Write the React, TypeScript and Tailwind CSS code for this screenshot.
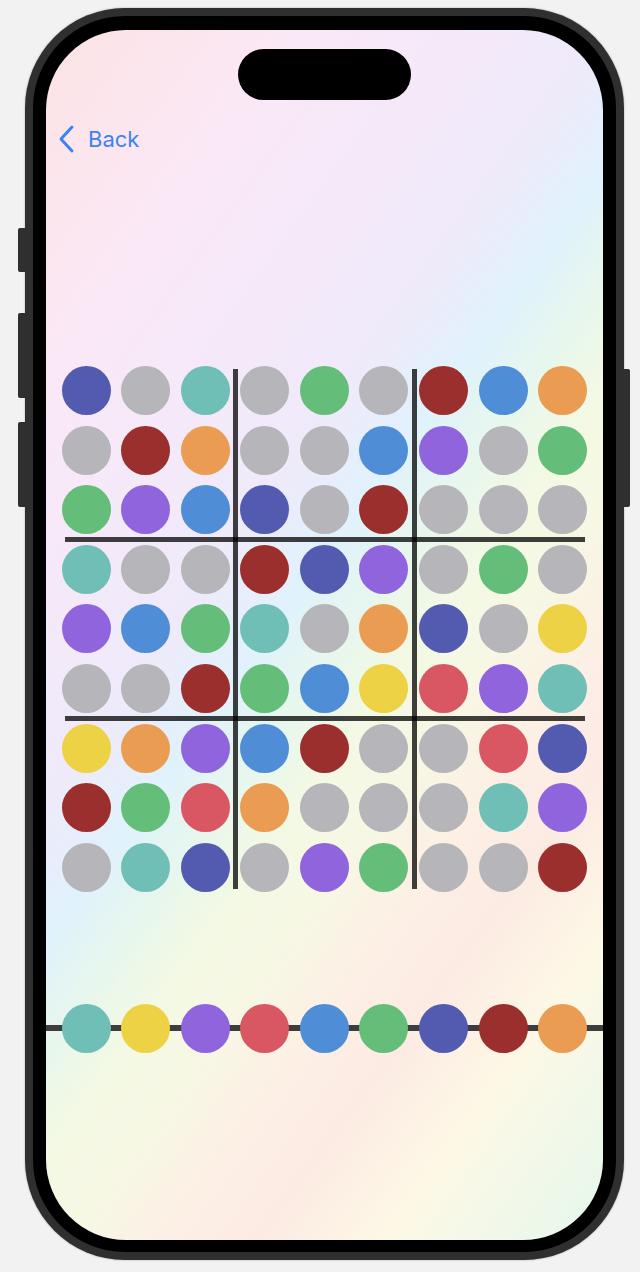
import React from 'react';

// palette colours
const C: Record<string, string> = {
  i: 'bg-[#525bb0]', // indigo
  g: 'bg-[#b6b5b9]', // gray (empty)
  t: 'bg-[#6fbfb6]', // teal
  r: 'bg-[#9b2f2d]', // dark red
  b: 'bg-[#4f8ed7]', // blue
  o: 'bg-[#e99c52]', // orange
  n: 'bg-[#64be7a]', // green
  p: 'bg-[#8f64dc]', // purple
  y: 'bg-[#edd245]', // yellow
  k: 'bg-[#d95762]', // pink red
};

const board = [
  'igtgngrbo',
  'groggbpgn',
  'npbigrggg',
  'tggripgng',
  'pbntgoigy',
  'ggrnbykpt',
  'yopbrggki',
  'rnkogggtp',
  'gtigpnggr',
];

const palette = 'typkbniro';

function Dot({ c }: { c: string }) {
  return <div className={`w-[49px] h-[49px] rounded-full ${C[c]}`} />;
}

export default function App() {
  return (
    <div className="w-[640px] h-[1272px] bg-[#f2f2f2] pt-[8px] pl-[25px] overflow-hidden font-['Inter',sans-serif]">
      <div className="relative w-[599px] h-[1252px] rounded-[100px] bg-[#2f2f2f] p-[8px] shadow-[0_0_2px_rgba(0,0,0,0.35)]">
        {/* side buttons */}
        <div className="absolute left-[-7px] top-[220px] w-[7px] h-[44px] rounded-l-[2px] bg-[#2f2f2f]" />
        <div className="absolute left-[-7px] top-[305px] w-[7px] h-[85px] rounded-l-[2px] bg-[#2f2f2f]" />
        <div className="absolute left-[-7px] top-[414px] w-[7px] h-[85px] rounded-l-[2px] bg-[#2f2f2f]" />
        <div className="absolute right-[-6px] top-[361px] w-[6px] h-[138px] rounded-r-[2px] bg-[#2f2f2f]" />

        <div className="h-full rounded-[92px] bg-black pl-[13px] pr-[13px] pt-[14px] pb-[12px]">
          <div className="h-full rounded-[80px] overflow-hidden flex flex-col bg-[linear-gradient(126deg,#fce3e3_0%,#fbe8f6_17%,#f5e9f9_28%,#efeafa_39%,#e0f2fc_46%,#e8f7ec_52%,#f3f9e4_57%,#f6f8e4_62%,#fdefe5_70%,#fcebe3_76%,#fdf8e6_85%,#ecf8ea_95%,#e5f6ee_100%)]">
            {/* dynamic island */}
            <div className="mt-[19px] mx-auto w-[173px] h-[51px] rounded-full bg-black shrink-0" />

            {/* back */}
            <div className="mt-[24px] h-[30px] flex items-center pl-[12px] text-[#3b82f6]">
              <svg width="18" height="30" viewBox="0 0 18 30" fill="none">
                <polyline points="14,3 3,15 14,27" stroke="currentColor" strokeWidth="3" strokeLinecap="round" strokeLinejoin="round" />
              </svg>
              <span className="ml-[12px] text-[22px] leading-none">Back</span>
            </div>

            {/* board */}
            <div className="relative mt-[212px] mx-auto w-[526px] grid grid-cols-[repeat(9,49px)] gap-[10.6px]">
              {board.map((row, ri) =>
                row.split('').map((c, ci) => <Dot key={`${ri}-${ci}`} c={c} />)
              )}
              {/* block dividers */}
              <div className="absolute left-[171px] top-[3px] bottom-[3px] w-[5px] bg-black/75" />
              <div className="absolute left-[350px] top-[3px] bottom-[3px] w-[5px] bg-black/75" />
              <div className="absolute top-[171px] left-[3px] right-[3px] h-[5px] bg-black/75" />
              <div className="absolute top-[350px] left-[3px] right-[3px] h-[5px] bg-black/75" />
            </div>

            {/* colour picker */}
            <div className="relative mt-[112px]">
              <div className="absolute inset-x-0 top-[21px] h-[6px] bg-[#3d3d3d]" />
              <div className="relative mx-auto w-[526px] grid grid-cols-[repeat(9,49px)] gap-[10.6px]">
                {palette.split('').map((c, i) => (
                  <Dot key={i} c={c} />
                ))}
              </div>
            </div>
          </div>
        </div>
      </div>
    </div>
  );
}
